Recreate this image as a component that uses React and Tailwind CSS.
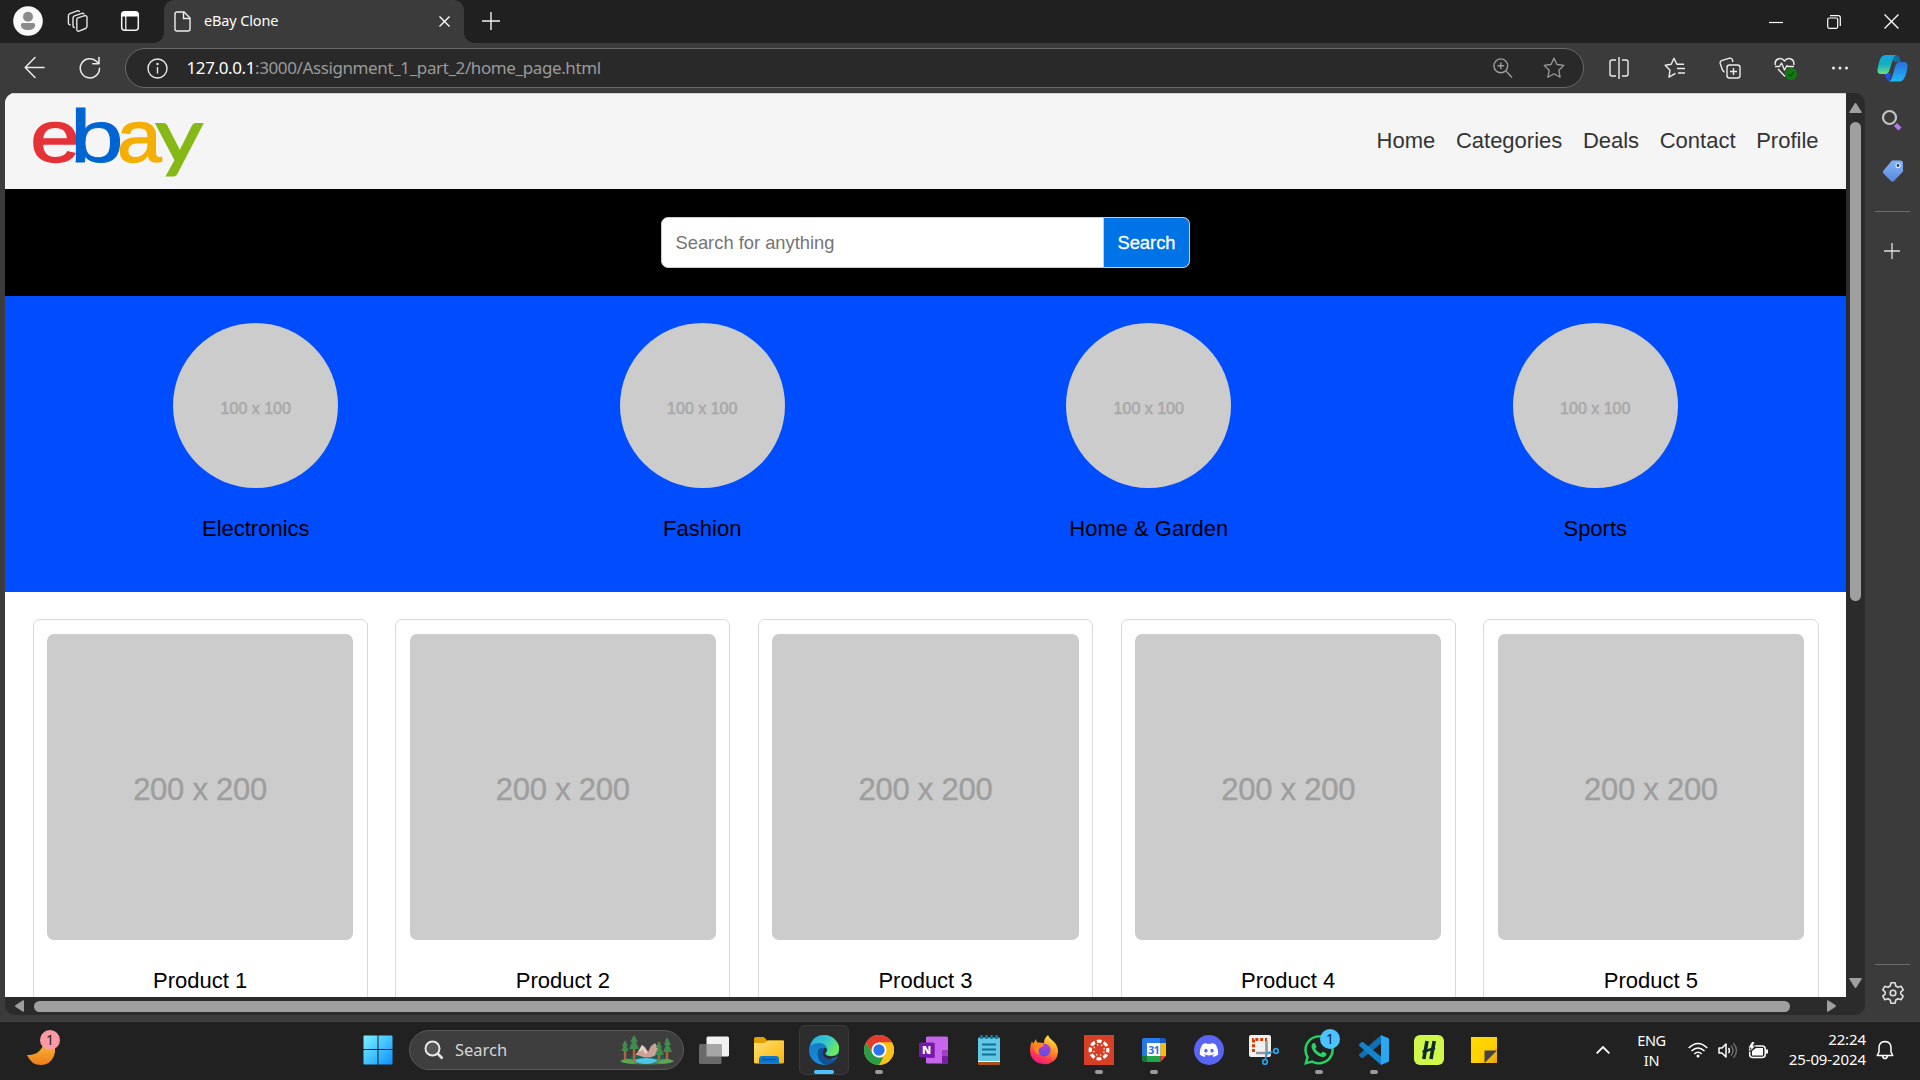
import React from "react";
import { FaDiscord, FaWhatsapp } from "react-icons/fa6";

const UI = "font-['Noto_Sans',sans-serif]";

/* Line icon on a 24 unit grid */
function Line({ size = 22, sw = 1.4, className = "", children }) {
  return (
    <svg width={size} height={size} viewBox="0 0 24 24" fill="none" stroke="currentColor" strokeWidth={sw} strokeLinecap="round" strokeLinejoin="round" className={"shrink-0 " + className}>
      {children}
    </svg>
  );
}

const starPath = "M12 2.2l3 6.3 6.8.9-5 4.8 1.3 7L12 17.8l-6.1 3.4 1.3-7-5-4.8 6.8-.9z";

function TabStrip() {
  return (
    <div className="flex h-[43px] shrink-0 items-center bg-[#202020] text-[#e6e6e6]">
      <div className="flex w-[164px] shrink-0 items-center pb-[2px] pl-[13px]">
        <svg width="30" height="30" viewBox="0 0 30 30">
          <circle cx="15" cy="15" r="14.8" fill="#f9f9f9" />
          <circle cx="15" cy="10.8" r="5" fill="#8b8b8b" />
          <path d="M9.8 17h10.4q2 0 2 2c0 3-3 5-7.200 5s-7.200-2-7.200-5q0-2 2-2z" fill="#8b8b8b" />
        </svg>
        <Line size={24} sw={1.4} className="ml-[22px]">
          <path d="M12.300 9.100l7.400-2.400q2-.5 2.300 1.300v9.500q-.2 1.500-1.500 2l-6.500 2.600q-2 .5-2.200-1.400v-9.500q0-1.500.5-2.100z" />
          <path d="M9.300 18.500q-1.300-.3-1.300-1.800V9q0-1.600 1.500-2.100l7.500-2.600q1.400-.4 2 .7" />
          <path d="M5 15.800q-1.600-.3-1.600-1.800V6.800q0-1.600 1.500-2.200l7.300-2.700q1.500-.4 2 .6" />
        </Line>
        <svg width="20" height="22" viewBox="0 0 20 22" className="ml-[31px]">
          <rect x="1.700" y="1.700" width="16.600" height="18.600" rx="3" fill="none" stroke="#f2f2f2" strokeWidth="1.500" />
          <path d="M1.500 6.500V4Q1.500 1.500 4 1.500h12q2.500 0 2.500 2.500v2.500z" fill="#fff" />
          <path d="M5.800 6v14" stroke="#f2f2f2" strokeWidth="1.300" />
        </svg>
      </div>
      <div className="relative flex h-[43px] w-[300px] shrink-0 items-center rounded-t-[10px] bg-[#3b3b3b] pl-[10px] pr-[13px]">
        <span className="absolute -left-[10px] bottom-0 h-[10px] w-[10px] bg-[radial-gradient(circle_at_0_0,#202020_9.5px,#3b3b3b_10px)]" />
        <span className="absolute -right-[10px] bottom-0 h-[10px] w-[10px] bg-[radial-gradient(circle_at_100%_0,#202020_9.500px,#3b3b3b_10px)]" />
        <svg width="17" height="21" viewBox="0 0 17 21" fill="none" stroke="#f0f0f0" strokeWidth="1.400">
          <path d="M3 1h7l6 6v11q0 2-2 2H3q-2 0-2-2V3q0-2 2-2z" />
          <path d="M9.500 1v6.500h6.500" />
        </svg>
        <span className={UI + " mb-[3px] ml-[13px] flex-1 whitespace-nowrap text-[14.500px] leading-5 tracking-[-0.150px] text-white"}>eBay Clone</span>
        <svg width="13" height="13" viewBox="0 0 13 13" stroke="#fff" strokeWidth="1.400"><path d="M1.500 1.500l10 10M11.500 1.500l-10 10" /></svg>
      </div>
      <svg width="18" height="18" viewBox="0 0 18 18" stroke="#f2f2f2" strokeWidth="1.400" className="mb-[2px] ml-[18px]"><path d="M9 0v18M0 9h18" /></svg>
      <div className="ml-auto flex items-center gap-[43.500px] pr-[21px]">
        <svg width="14" height="14" viewBox="0 0 14 14" stroke="#fff" strokeWidth="1.200"><path d="M0 7.500h14" /></svg>
        <svg width="14" height="14" viewBox="0 0 14 14" fill="none" stroke="#fff" strokeWidth="1.200"><rect x=".7" y="3" width="10" height="10.300" rx="1.500" /><path d="M3 .7h8.300q2 0 2 2v8.300" /></svg>
        <svg width="15" height="15" viewBox="0 0 14 14" stroke="#fff" strokeWidth="1.200"><path d="M.5.5l13 13M13.500.5l-13 13" /></svg>
      </div>
    </div>
  );
}

function Copilot() {
  return (
    <svg width="31" height="28" viewBox="0 0 31 28">
      <defs>
        <linearGradient id="cpA" x1="0" y1="0" x2="0" y2="1"><stop offset="0" stopColor="#12a5e8" /><stop offset=".5" stopColor="#17aebf" /><stop offset="1" stopColor="#6fdc8c" /></linearGradient>
        <linearGradient id="cpB" x1="0" y1="0" x2="0" y2="1"><stop offset="0" stopColor="#2b6fdc" /><stop offset="1" stopColor="#1fb6f7" /></linearGradient>
      </defs>
      <path d="M7 19h7l-1 8q-3 0-4-3z" fill="#1d4fe0" />
      <path d="M15 1h4q3 0 4 4l1 3h-7z" fill="#0c6f9e" />
      <path d="M8.500 1H19q-2 .5-3 4l-3.500 11q-1 4-4.500 4H4q-4 0-3.500-4.500Q2 7 4 3.500 5.500 1 8.500 1z" fill="url(#cpA)" />
      <path d="M22.500 27.500H12q2-.5 3-4l3.500-12q1-3.500 4.500-3.500h4q4 0 3.500 4.500-1 8-3.500 12-1.500 3-4.500 3z" fill="url(#cpB)" />
    </svg>
  );
}

function AddressBar() {
  return (
    <div className="flex h-[50px] shrink-0 items-center bg-[#3b3b3b] text-[#ececec]">
      <div className="flex w-[125px] shrink-0 items-center pb-px pl-[24px]">
        <svg width="21" height="23" viewBox="0 0 21 23" fill="none" stroke="currentColor" strokeWidth="1.500" strokeLinecap="round" strokeLinejoin="round"><path d="M20 11.500H1.500M11 1.500L1.200 11.500l9.800 10" /></svg>
        <svg width="22" height="24" viewBox="0 0 22 24" fill="none" stroke="currentColor" strokeWidth="1.500" strokeLinecap="round" strokeLinejoin="round" className="ml-[34px]"><path d="M20.500 12.200A9.600 9.600 0 1 1 17.700 5.500l2 2M20 1.500v6.300h-6.300" /></svg>
      </div>
      <div className="flex h-[40px] w-[1459px] shrink-0 items-center rounded-full border border-[#6a6a6a] bg-[#292929] pl-[21px] pr-[17px]">
        <svg width="21" height="21" viewBox="0 0 21 21" fill="none" stroke="#e8e8e8" strokeWidth="1.400"><circle cx="10.500" cy="10.500" r="9.500" /><path d="M10.500 9v6.500" /><circle cx="10.500" cy="6" r=".5" fill="#fff" /></svg>
        <span className={UI + " ml-[18.500px] flex-1 whitespace-nowrap text-[17px] leading-6 tracking-[-0.390px] text-[#9a9a9a]"}>
          <span className="text-white">127.0.0.1</span>:3000/Assignment_1_part_2/home_page.html
        </span>
        <svg width="20" height="21" viewBox="0 0 20 21" fill="none" stroke="#9b9b9b" strokeWidth="1.400"><circle cx="7.800" cy="7.800" r="6.900" /><path d="M13 13l6 6.500M7.800 4.500v6.600M4.500 7.800h6.600" /></svg>
        <Line size={24} sw={1.3} className="ml-[29px] text-[#9b9b9b]"><path d={starPath} /></Line>
      </div>
      <div className="flex flex-1 items-center pl-[25px]">
        <svg width="20" height="22" viewBox="0 0 20 22" fill="none" stroke="currentColor" strokeWidth="1.400"><path d="M7 3H3Q1 3 1 5v12q0 2 2 2h4M13 3h4q2 0 2 2v12q0 2-2 2h-4M10 0v22" /></svg>
        <svg width="22" height="22" viewBox="0 0 22 22" fill="none" stroke="currentColor" strokeWidth="1.400" strokeLinejoin="round" className="ml-[35px]"><path d="M11.500 16.300L5 20.200l1-7L1.200 8.300l6-1L10 1.300l2.800 6H20M13 11.500h8M14 16h7" /></svg>
        <svg width="22" height="22" viewBox="0 0 22 22" fill="none" stroke="currentColor" strokeWidth="1.400" strokeLinejoin="round" className="ml-[33px]"><rect x="8" y="8" width="13" height="13" rx="2.500" /><path d="M14.500 11v7M11 14.500h7M5.500 15q-1.500-.5-2.200-2.500L1.200 6.500Q.8 4.500 2.500 3.700L10.500 1.200q2-.5 2.800 1.300l.7 2.500" /></svg>
        <div className="relative ml-[33px] h-[22px] w-[24px]">
          <svg width="22" height="22" viewBox="0 0 22 22" fill="none" stroke="currentColor" strokeWidth="1.400" strokeLinejoin="round"><path d="M1 9.500h4.500l2-3.500 3 7 2.500-4.500 1 1H20M1.300 8Q.5 3.500 4 2q4-1.500 6.500 2Q13 .5 17 2q3.500 1.500 2.800 6M4 12l7 7.500" /></svg>
          <svg width="12" height="12" viewBox="0 0 12 12" className="absolute -bottom-[1px] right-[1px]"><circle cx="6" cy="6" r="6" fill="#107c10" /><path d="M3.200 6.200l2 2L9 4.300" fill="none" stroke="#0a3d0a" strokeWidth="1.200" /></svg>
        </div>
        <svg width="18" height="6" viewBox="0 0 18 6" fill="currentColor" className="ml-[33px]"><circle cx="2.500" cy="3" r="1.500" /><circle cx="9" cy="3" r="1.500" /><circle cx="15.500" cy="3" r="1.500" /></svg>
        <div className="ml-[28px]"><Copilot /></div>
      </div>
    </div>
  );
}

function EbayLogo() {
  return (
    <svg width="176" height="76" viewBox="0 0 176 76" fontFamily="Liberation Sans, Arial, sans-serif" fontSize="74" className="shrink-0 overflow-visible">
      <text transform="translate(-2.800 58.300) scale(1.210 1)" fill="#e53238" stroke="#e53238" strokeWidth="1.400">e</text>
      <text transform="translate(37 58.300) scale(1.300 1)" fill="#0064d2" stroke="#0064d2" strokeWidth=".9">b</text>
      <text transform="translate(84 58.300) scale(1.080 1)" fill="#f5af02" stroke="#f5af02" strokeWidth="1.400">a</text>
      <text transform="translate(122.600 58) scale(1.210 1)" fontFamily="Lato, sans-serif" fontWeight="400" fontSize="76" fill="#86b817" stroke="#86b817" strokeWidth="1.800">y</text>
    </svg>
  );
}

const NAV = ["Home", "Categories", "Deals", "Contact", "Profile"];
const CATEGORIES = ["Electronics", "Fashion", "Home & Garden", "Sports"];
const PRODUCTS = ["Product 1", "Product 2", "Product 3", "Product 4", "Product 5"];

function Page() {
  return (
    <div className="flex h-[904px] w-[1841px] flex-col overflow-hidden rounded-tl-[10px] bg-white font-['Liberation_Sans',Arial,sans-serif] text-[22px] text-black">
      <header className="flex h-[96px] shrink-0 items-center justify-between border-t border-[#d4d4d4] bg-[#f5f5f5] px-[27.500px]">
        <EbayLogo />
        <nav className="mb-[2px] flex gap-[20.600px] text-[#333]">
          {NAV.map((n) => <a key={n} className="leading-[25px]">{n}</a>)}
        </nav>
      </header>
      <div className="flex h-[107px] shrink-0 items-center justify-center bg-black">
        <div className="flex h-[51px] w-[529px] text-[18.330px]">
          <div className="flex flex-1 items-center rounded-l-[7px] border border-[#ccc] bg-white pl-[13.500px] text-[#757575]">Search for anything</div>
          <div className="flex w-[86px] items-center justify-center rounded-r-[7px] border border-l-0 border-[#ccc] bg-[#0073e6] text-white [-webkit-text-stroke:0.300px_#fff]">Search</div>
        </div>
      </div>
      <div className="flex h-[296px] shrink-0 bg-[#004cff] px-[27.500px] pt-[27px]">
        {CATEGORIES.map((c) => (
          <div key={c} className="flex flex-1 flex-col items-center">
            <div className="flex h-[165px] w-[165px] items-center justify-center rounded-full bg-[#ccc] pt-[7px] text-[16px] text-[#a8a8a8] [-webkit-text-stroke:0.500px_#a8a8a8]">100 x 100</div>
            <p className="mt-[28px] leading-[25px]">{c}</p>
          </div>
        ))}
      </div>
      <div className="grid grid-cols-5 gap-[27.500px] px-[27.500px] pt-[27px]">
        {PRODUCTS.map((p) => (
          <div key={p} className="flex h-[420px] flex-col rounded-[7px] border border-[#d9d9d9] px-[13.500px] py-[14px] text-center">
            <div className="flex h-[306px] items-center justify-center rounded-[7px] bg-[#ccc] pt-[6px] text-[31px] text-[#9e9e9e] [-webkit-text-stroke:0.400px_#a0a0a0]"><span className="tracking-[-0.250px]">200 x 200</span></div>
            <p className="mt-[28px] leading-[25px]">{p}</p>
          </div>
        ))}
      </div>
    </div>
  );
}

function Sidebar() {
  return (
    <aside className="flex w-[55px] shrink-0 flex-col items-center bg-[#3b3b3b] pt-[15px] text-[#e0e0e0]">
      <svg width="22" height="24" viewBox="0 0 22 24" fill="none" className="mr-px"><circle cx="8.500" cy="9.500" r="6.500" stroke="#c4c4c4" strokeWidth="2.200" /><path d="M14.500 16.500l4.500 4.500" stroke="#b07ae6" strokeWidth="4.500" /></svg>
      <svg width="22" height="24" viewBox="0 0 22 24" className="mt-[27px]">
        <defs><linearGradient id="tagG" x1="0" y1="0" x2="0" y2="1"><stop offset="0" stopColor="#83b4fb" /><stop offset="1" stopColor="#5b88dc" /></linearGradient></defs>
        <path d="M10 1.500h8q3 0 3 3v8L12 22q-1.500 1.500-3 0l-7.500-7.500q-1.500-1.500 0-3z" fill="url(#tagG)" /><circle cx="16" cy="6.500" r="2" fill="#333" stroke="#e4efff" strokeWidth="1.200" />
      </svg>
      <div className="mt-[28px] h-px w-[35px] bg-[#6b6b6b]" />
      <svg width="16" height="16" viewBox="0 0 16 16" stroke="#e0e0e0" strokeWidth="1.300" className="mr-px mt-[31px]"><path d="M8 0v16M0 8h16" /></svg>
      <div className="mt-auto h-px w-[35px] bg-[#6b6b6b]" />
      <Line size={24} sw={1.6} className="mb-[16px] mt-[16px]">
        <circle cx="12" cy="12" r="2.800" />
        <path d="M10 1.800h4l.8 3.200 2.200 1.300 3.200-1 2 3.500-2.400 2.200v2l2.400 2.200-2 3.500-3.200-1-2.200 1.300-.8 3.200h-4l-.8-3.200L7 17.700l-3.200 1-2-3.500L4.200 13v-2L1.800 8.800l2-3.500 3.200 1L9.200 5z" />
      </Line>
    </aside>
  );
}

/* ---------- task bar icons, 30 x 30 each ---------- */
const S = ({ children }) => <svg width="30" height="30" viewBox="0 0 30 30">{children}</svg>;

const TaskView = () => (
  <S><rect x="7.500" y="1.500" width="22.500" height="20" rx="1.500" fill="#f2f2f2" /><rect x="0" y="9" width="22.500" height="20" rx="1.500" fill="#6a6a6a" /><path d="M7.500 9h15v12.500h-15z" fill="#a6a6a6" /></S>
);
const Folder = () => (
  <S>
    <defs><linearGradient id="fo" x1="0" y1="0" x2="1" y2="1"><stop offset="0" stopColor="#ffdf76" /><stop offset="1" stopColor="#fbb504" /></linearGradient></defs>
    <path d="M0 4q0-2 2-2h7q1.500 0 3 2l1 1.500h16q1 0 1 1V12H0z" fill="#dfa000" /><path d="M0 8h9q2 0 3.500-1.500L14 5.500h15q1 0 1 1V27q0 1.500-1.500 1.500h-27Q0 28.500 0 27z" fill="url(#fo)" />
    <path d="M5 28.500V24q0-3 3-3h14q3 0 3 3v4.500z" fill="#0b78cf" /><path d="M8.500 24.500h13" stroke="#064a8c" strokeWidth="1.300" />
  </S>
);
const Edge = () => (
  <S>
    <defs>
      <linearGradient id="e1" x1="0" y1="0" x2="1" y2=".5"><stop offset="0" stopColor="#2aa8e0" /><stop offset=".55" stopColor="#35c6d0" /><stop offset="1" stopColor="#6bea5a" /></linearGradient>
      <linearGradient id="e2" x1="0" y1="0" x2="0" y2="1"><stop offset="0" stopColor="#1274b8" /><stop offset="1" stopColor="#1690e2" /></linearGradient>
    </defs>
    <circle cx="15" cy="15" r="15" fill="url(#e2)" />
    <path d="M1 11Q4 0 15 0q7 0 11.500 5T30 14q0 7-7.500 7-6 0-5.500-3 2-2 1-5-2-5-8-5-5 0-9 3z" fill="url(#e1)" />
    <path d="M9 16q-2 9 6 13.500 8 1 12.500-6Q22 26 17 22q-4-4-2-8.500Q10 12 9 16z" fill="#11509a" />
    <path d="M15 13q-3 8 3 10.500 6 2 11-2.500l1 .5V18q-3 4-10 3-5-1-3.500-3.500Q20 13 15 13z" fill="#2b2b2b" />
  </S>
);
const Chrome = () => (
  <S>
    <circle cx="15" cy="15" r="15" fill="#fbc116" />
    <path d="M2 7.500A15 15 0 0 1 28 7.500H15L8.500 18.700z" fill="#e33b2e" />
    <path d="M2 7.500l6.500 11.200L15 22.500h6.500L15 30A15 15 0 0 1 2 7.500z" fill="#2a9c48" />
    <path d="M15 30l6.500-11.300L22 10l-7-2.500h13A15 15 0 0 1 15 30z" fill="#fbc116" />
    <circle cx="15" cy="15" r="7.500" fill="#fff" /><circle cx="15" cy="15" r="5.700" fill="#2b74ea" />
  </S>
);
const OneNote = () => (
  <S>
    <rect x="7" y="1.500" width="22" height="27" rx="1.500" fill="#c766ea" /><path d="M23 15h6v6h-6z" fill="#a13fc4" /><path d="M23 21h6v7.500h-6z" fill="#7a1fa2" /><path d="M7 8h9v15H7z" fill="#8d2fb8" />
    <rect x="0" y="7.500" width="15" height="15" rx="1.500" fill="#7719aa" />
    <text x="7.500" y="19" textAnchor="middle" fontFamily="Open Sans, sans-serif" fontWeight="800" fontSize="11" fill="#fff">N</text>
  </S>
);
const Notepad = () => (
  <S>
    <path d="M4 27h22v2q0 1-1 1H5q-1 0-1-1z" fill="#a65212" /><path d="M4 25h22v2H4z" fill="#f1f1f1" /><rect x="4" y="2.500" width="22" height="23.500" rx="1" fill="#62c8e4" />
    <path d="M8 9.500h14M8 14.500h14M8 19.500h14" stroke="#0f6f96" strokeWidth="2" /><path d="M7.500 0v4M12.500 0v4M17.500 0v4M22.500 0v4" stroke="#16799d" strokeWidth="2.600" />
  </S>
);
const Firefox = () => (
  <S>
    <defs>
      <linearGradient id="ff" x1=".8" y1="0" x2=".3" y2="1"><stop offset="0" stopColor="#fff14f" /><stop offset=".4" stopColor="#ff9a20" /><stop offset=".75" stopColor="#ff3a4e" /><stop offset="1" stopColor="#e31587" /></linearGradient>
      <linearGradient id="fp" x1="0" y1="0" x2="0" y2="1"><stop offset="0" stopColor="#b13ddb" /><stop offset="1" stopColor="#5b4ee0" /></linearGradient>
    </defs>
    <path d="M19 0q1 3 4 5 6 5 6 11 0 7-5 10.500T14 29Q5 28 2 21-.5 14 3 6q.5 2 1.500 2.500Q6 5 7 4q0 2 1.500 3.500L15 8q0-5 4-8z" fill="url(#ff)" />
    <circle cx="15" cy="15" r="6.500" fill="url(#fp)" /><path d="M4 9q6-3 11 1-1 2-4 2.500-3 3 0 6.500Q5 19 4 9z" fill="#ff8a1c" />
  </S>
);
const Canvas = () => (
  <S>
    <rect width="30" height="30" fill="#d64027" />
    <circle cx="15" cy="15" r="8.800" fill="none" stroke="#fff" strokeWidth="3.200" strokeDasharray="4.700 2.210" strokeDashoffset="2.350" />
    <circle cx="15" cy="15" r="5.300" fill="none" stroke="#fff" strokeWidth="1.300" strokeDasharray="1.300 2.863" strokeDashoffset="-1.500" />
  </S>
);
const Calendar = () => (
  <S>
    <path d="M3 5q0-2 2-2h16v5H8v13H3z" fill="#2878ea" /><path d="M21 3h4q2 0 2 2v3h-6z" fill="#1558c8" /><path d="M21.500 8H27v13h-5.500z" fill="#fbbc04" /><path d="M8 21h13.500v6H8z" fill="#20a548" /><path d="M3 21h5v6H5q-2 0-2-2z" fill="#137a35" /><path d="M21.500 21H27l-5.500 6z" fill="#e94235" /><path d="M8 8h13.500v13H8z" fill="#fff" />
    <text x="14.800" y="18.800" textAnchor="middle" fontFamily="Open Sans, sans-serif" fontWeight="700" fontSize="10.500" letterSpacing="-.5" fill="#2474e6">31</text>
  </S>
);
const Discord = () => (
  <div className="flex h-[30px] w-[30px] items-center justify-center rounded-full bg-[#5865f2] text-white"><FaDiscord size={20} /></div>
);
const Snip = () => (
  <S>
    <rect x="0" y="0" width="22" height="22" rx="2" fill="#f0f0f0" />
    <path d="M4.500 17V4.500H18" fill="none" stroke="#d83b01" strokeWidth="3" strokeDasharray="3 1.800" />
    <path d="M17.500 6v14.500M7 18h15" stroke="#8f969c" strokeWidth="2.600" /><path d="M17.500 18l-1 6M17.500 18l6-1" stroke="#3a91c8" strokeWidth="1.800" />
    <circle cx="16" cy="27" r="2.300" fill="none" stroke="#2aa3ea" strokeWidth="1.700" /><circle cx="27" cy="16" r="2.300" fill="none" stroke="#2aa3ea" strokeWidth="1.700" />
  </S>
);
const WhatsApp = () => (
  <div className="relative h-[30px] w-[30px] text-[#25d366]">
    <FaWhatsapp size={34} className="absolute -left-[2px] -top-[2px]" />
    <span className={UI + " absolute -top-[6px] left-[16px] flex h-5 w-5 items-center justify-center rounded-full bg-[#4cc2ff] text-[14px] leading-none text-[#10222d]"}>1</span>
  </div>
);
const VSCode = () => (
  <S>
    <path d="M22 0v8.500L4.500 22.500Q3 23.500 2 22.500L.5 21q-1-1 0-2z" fill="#0f6fb4" /><path d="M22 30v-8.500L4.500 7.500Q3 6.500 2 7.500L.5 9q-1 1 0 2z" fill="#1485cc" /><path d="M22 0l8 3.500v23L22 30z" fill="#29a7f0" />
  </S>
);
const HApp = () => (
  <div className="flex h-[30px] w-[30px] items-center justify-center rounded-[6px] bg-[#cff84b]">
    <svg width="16" height="20" viewBox="0 0 16 20" stroke="#0d2b2b" strokeWidth="3.600"><path d="M6 1L2.800 19M13.200 1L10 19" /><path d="M1.500 12l12.500-4" strokeWidth="2.600" /></svg>
  </div>
);
const Sticky = () => (
  <S>
    <defs><linearGradient id="st" x1="0" y1="0" x2="1" y2="1"><stop offset="0" stopColor="#ffdc00" /><stop offset=".6" stopColor="#ffcf00" /><stop offset="1" stopColor="#e89f00" /></linearGradient></defs>
    <path d="M2 2h26v26H2z" fill="url(#st)" /><path d="M15.500 15.500H28L15.500 28z" fill="#444" />
  </S>
);

const TASKS = [
  { id: "tasks", Icon: TaskView }, { id: "files", Icon: Folder }, { id: "edge", Icon: Edge, active: true }, { id: "chrome", Icon: Chrome, open: true },
  { id: "onenote", Icon: OneNote }, { id: "notepad", Icon: Notepad }, { id: "firefox", Icon: Firefox }, { id: "canvas", Icon: Canvas, open: true },
  { id: "calendar", Icon: Calendar, open: true }, { id: "discord", Icon: Discord }, { id: "snip", Icon: Snip }, { id: "whatsapp", Icon: WhatsApp, open: true },
  { id: "vscode", Icon: VSCode, open: true }, { id: "h", Icon: HApp }, { id: "sticky", Icon: Sticky },
];

function Landscape() {
  return (
    <svg width="54" height="32" viewBox="0 0 54 32">
      <ellipse cx="27" cy="27" rx="26" ry="3.500" fill="#3f7f4a" />
      <path d="M13 24l6-8 3-5 3 2 3 5 3-6 4-3 5 8 3 7z" fill="#c9a196" /><path d="M22 11l-4 7 5-2 2 4 3-2z" fill="#e8cfc6" />
      <path d="M8 25q6-6 12-3 8 3 14 0 7-4 12 3z" fill="#1f5f55" /><path d="M14 26q12-4 24 0-4 4-12 4t-12-4z" fill="#4fc3e8" />
      <path d="M5 26V8M14 27V3M39 26V8M47 26V5" stroke="#b0683a" strokeWidth="2.400" />
      <path d="M5 6l3 6H6.500l2 5H1.500l2-5H2zM14 1l4 7h-2l3 7H9l3-7h-2zM39 7l3 7h-1l3 7h-9l3-7h-2zM47 3l4 8h-2l3 7h-9l3-7h-2z" fill="#3f8a4d" />
      <path d="M0 27q8-4 14 0l4 2Q6 31 0 27zM54 27q-8-4-15 0l-4 2q13 2 19-2z" fill="#5da555" />
    </svg>
  );
}

function Taskbar() {
  return (
    <div className={UI + " flex h-[59px] shrink-0 items-center border-t border-[#434343] bg-[#212121] pb-[2px] text-white"}>
      <div className="relative -mt-[4px] ml-[27px] h-[36px] w-[34px] shrink-0">
        <svg width="34" height="36" viewBox="0 0 34 36">
          <defs><linearGradient id="mo" x1="0" y1="0" x2="0" y2="1"><stop offset="0" stopColor="#f8c23c" /><stop offset="1" stopColor="#ef7d1c" /></linearGradient></defs>
          <path d="M0 25q14 1 18-15l7-1q5 9 2 17-4 9-13 9Q4 35 0 25z" fill="url(#mo)" />
        </svg>
        <span className="absolute left-[13px] top-0 flex h-5 w-5 items-center justify-center rounded-full bg-[#ff99a4] text-[14px] leading-none text-[#222]">1</span>
      </div>
      <svg width="30" height="30" viewBox="0 0 30 30" className="ml-[301.500px] shrink-0">
        <defs><linearGradient id="wi" x1="0" y1="0" x2="1" y2="1"><stop offset="0" stopColor="#7df0ff" /><stop offset=".5" stopColor="#43c4ff" /><stop offset="1" stopColor="#0a8fff" /></linearGradient></defs>
        <path d="M1.500.5h13V14H.5V1.500q0-1 1-1zM15.500.5h13q1 0 1 1V14h-14zM.5 15h14v14.500h-13q-1 0-1-1zM15.500 15h14v13.500q0 1-1 1h-13z" fill="url(#wi)" />
      </svg>
      <div className="ml-[16.500px] flex h-[40px] w-[275px] shrink-0 items-center rounded-full border border-[#585858] bg-[#3e3e3e] pl-[14px] pr-[9px]">
        <svg width="20" height="20" viewBox="0 0 20 20" fill="none" stroke="#e4e8ee" strokeWidth="2"><circle cx="8.500" cy="8.500" r="7" fill="#555" /><path d="M13.500 13.500l5 5" strokeWidth="2.500" /></svg>
        <span className="ml-[11px] flex-1 pt-px text-[16.500px] leading-none text-[#d6d6d6]">Search</span>
        <Landscape />
      </div>
      <div className="ml-[2.500px] flex shrink-0">
        {TASKS.map(({ id, Icon, active, open }) => (
          <div key={id} className="flex h-[56px] w-[55px] items-center justify-center">
            <div className={active ? "relative flex h-[50px] w-[50px] items-center justify-center rounded-[6px] border border-[#393939] bg-[#2d2d2d]" : "relative flex h-[50px] w-[50px] items-center justify-center"}>
              <Icon />
              {active && <span className="absolute bottom-0 left-[14px] h-[4px] w-5 rounded-full bg-[#4cc2ff]" />}
              {open && <span className="absolute bottom-[1px] left-[21px] h-[4px] w-2 rounded-full bg-[#9a9a9a]" />}
            </div>
          </div>
        ))}
      </div>
      <div className="ml-auto flex items-center pr-[26px]">
        <svg width="14" height="8" viewBox="0 0 14 8" fill="none" stroke="#fff" strokeWidth="1.800"><path d="M.7 7.300L7 1l6.300 6.300" /></svg>
        <div className="-mt-px ml-[26px] w-[31px] whitespace-nowrap text-center text-[14.500px] leading-5 tracking-[-0.300px]">ENG<br />IN</div>
        <svg width="20" height="16" viewBox="0 0 20 16" fill="none" stroke="#fff" strokeWidth="1.600" className="ml-[21px]"><path d="M.7 6Q10-3 19.300 6M3.500 9q6.500-6 13 0M6.300 12q3.700-3.500 7.400 0" /><circle cx="10" cy="14" r="1.500" fill="#fff" stroke="none" /></svg>
        <svg width="20" height="17" viewBox="0 0 20 17" fill="none" stroke="#fff" strokeWidth="1.500" className="ml-[10px]"><path d="M1 6h3l4-4v13l-4-4H1z" strokeLinejoin="round" /><path d="M10.500 6q1.800 2.500 0 5" /><path d="M13 3.500q4 5 0 10M15.500 1.200q6 7.300 0 14.600" stroke="#6a6a6a" /></svg>
        <svg width="20" height="17" viewBox="0 0 20 17" className="ml-[10px]"><rect x="1.700" y="4" width="15.500" height="11.500" rx="3" fill="none" stroke="#fff" strokeWidth="1.500" /><path d="M4 13.500V9l4-3h7v7.500zM18 7.500h2v4h-2z" fill="#fff" /><path d="M4-.5L0 6h3L1.500 10 7.500 4H5L7-.5z" fill="#fff" stroke="#212121" strokeWidth=".7" /></svg>
        <div className="-mt-[3px] ml-[17px] w-[81px] whitespace-nowrap text-right text-[15px] leading-5 tracking-[-0.100px]">22:24<br />25-09-2024</div>
        <svg width="18" height="20" viewBox="0 0 18 20" fill="none" stroke="#fff" strokeWidth="1.500" strokeLinejoin="round" className="ml-[10px]"><path d="M9 1.500q-6 .3-6 6.500v4l-1.800 3.500h15.600L15 12V8q0-6.200-6-6.500zM6.500 16q.5 2.500 2.500 2.500t2.500-2.500" /></svg>
      </div>
    </div>
  );
}

export default function App() {
  return (
    <div className="flex h-[1080px] w-[1920px] flex-col overflow-hidden bg-[#3b3b3b]">
      <TabStrip />
      <AddressBar />
      <div className="flex h-[928px] shrink-0">
        <div className="ml-[5px] flex w-[1860px] shrink-0 flex-col">
          <div className="flex h-[904px]">
            <Page />
            <div className="flex w-[19px] flex-col items-center rounded-tr-[10px] bg-[#2b2b2b] pb-[9px] pt-[10px]">
              <svg width="13" height="10" viewBox="0 0 13 10" fill="#9f9f9f"><path d="M6.500 0q.7 0 1 .7L12.700 9q.3 1-.7 1H1q-1 0-.7-1L5.500.7q.3-.7 1-.7z" /></svg>
              <div className="mt-[9px] h-[479px] w-[11px] rounded-full bg-[#9f9f9f]" />
              <svg width="13" height="10" viewBox="0 0 13 10" fill="#9f9f9f" className="mt-auto"><path d="M6.500 10q.7 0 1-.7L12.700 1q.3-1-.7-1H1q-1 0-.7 1l5.200 8.300q.3.700 1 .7z" /></svg>
            </div>
          </div>
          <div className="flex h-[18px] items-center rounded-b-[10px] bg-[#2b2b2b] pl-[10px]">
            <svg width="9" height="12" viewBox="0 0 9 12" fill="#9f9f9f"><path d="M0 6q0-.7.700-1L8 .2q1-.3 1 .8v10q0 1-1 .8L.700 7Q0 6.700 0 6z" /></svg>
            <div className="ml-[10px] h-[11px] w-[1756px] rounded-full bg-[#9f9f9f]" />
            <svg width="9" height="12" viewBox="0 0 9 12" fill="#9f9f9f" className="ml-[37px]"><path d="M9 6q0-.7-.700-1L1 .2Q0-.1 0 1v10q0 1 1 .8L8.300 7Q9 6.700 9 6z" /></svg>
          </div>
        </div>
        <Sidebar />
      </div>
      <Taskbar />
    </div>
  );
}
